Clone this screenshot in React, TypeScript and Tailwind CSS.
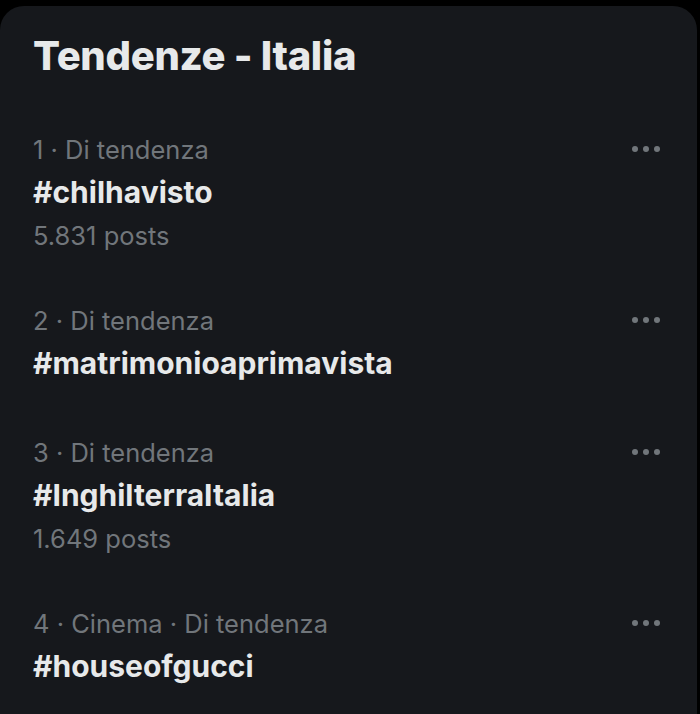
const trends = [
  { meta: "1 · Di tendenza", tag: "#chilhavisto", posts: "5.831 posts" },
  { meta: "2 · Di tendenza", tag: "#matrimonioaprimavista" },
  { meta: "3 · Di tendenza", tag: "#InghilterraItalia", posts: "1.649 posts" },
  { meta: "4 · Cinema · Di tendenza", tag: "#houseofgucci" },
];

const MoreDots = () => (
  <div className="flex items-center gap-[5px] h-[43px]">
    <span className="w-[6px] h-[6px] rounded-full bg-[#71767b]" />
    <span className="w-[6px] h-[6px] rounded-full bg-[#71767b]" />
    <span className="w-[6px] h-[6px] rounded-full bg-[#71767b]" />
  </div>
);

const App = () => {
  return (
    <div className="w-[700px] h-[714px] bg-black overflow-hidden font-['Inter',sans-serif] pt-[6px]">
      <div className="w-[697px] h-[760px] bg-[#16181c] rounded-[24px]">
        <div className="px-[33px] pt-[25px] pb-[23px] text-[40px] leading-[50px] font-extrabold text-[#e7e9ea] tracking-[-0.3px]">
          Tendenze - Italia
        </div>
        {trends.map((t) => (
          <div
            key={t.tag}
            className="flex justify-between items-start pl-[33px] pr-[37px] py-[23.5px]"
          >
            <div className="flex flex-col">
              <div className="h-[43px] leading-[43px] text-[25.5px] text-[#71767b]">
                {t.meta}
              </div>
              <div className="h-[42px] leading-[42px] text-[30px] font-bold text-[#e7e9ea]">
                {t.tag}
              </div>
              {t.posts && (
                <div className="mt-[6px] h-[33px] leading-[33px] text-[25.5px] text-[#71767b]">
                  {t.posts}
                </div>
              )}
            </div>
            <MoreDots />
          </div>
        ))}
      </div>
    </div>
  );
};

export default App;
